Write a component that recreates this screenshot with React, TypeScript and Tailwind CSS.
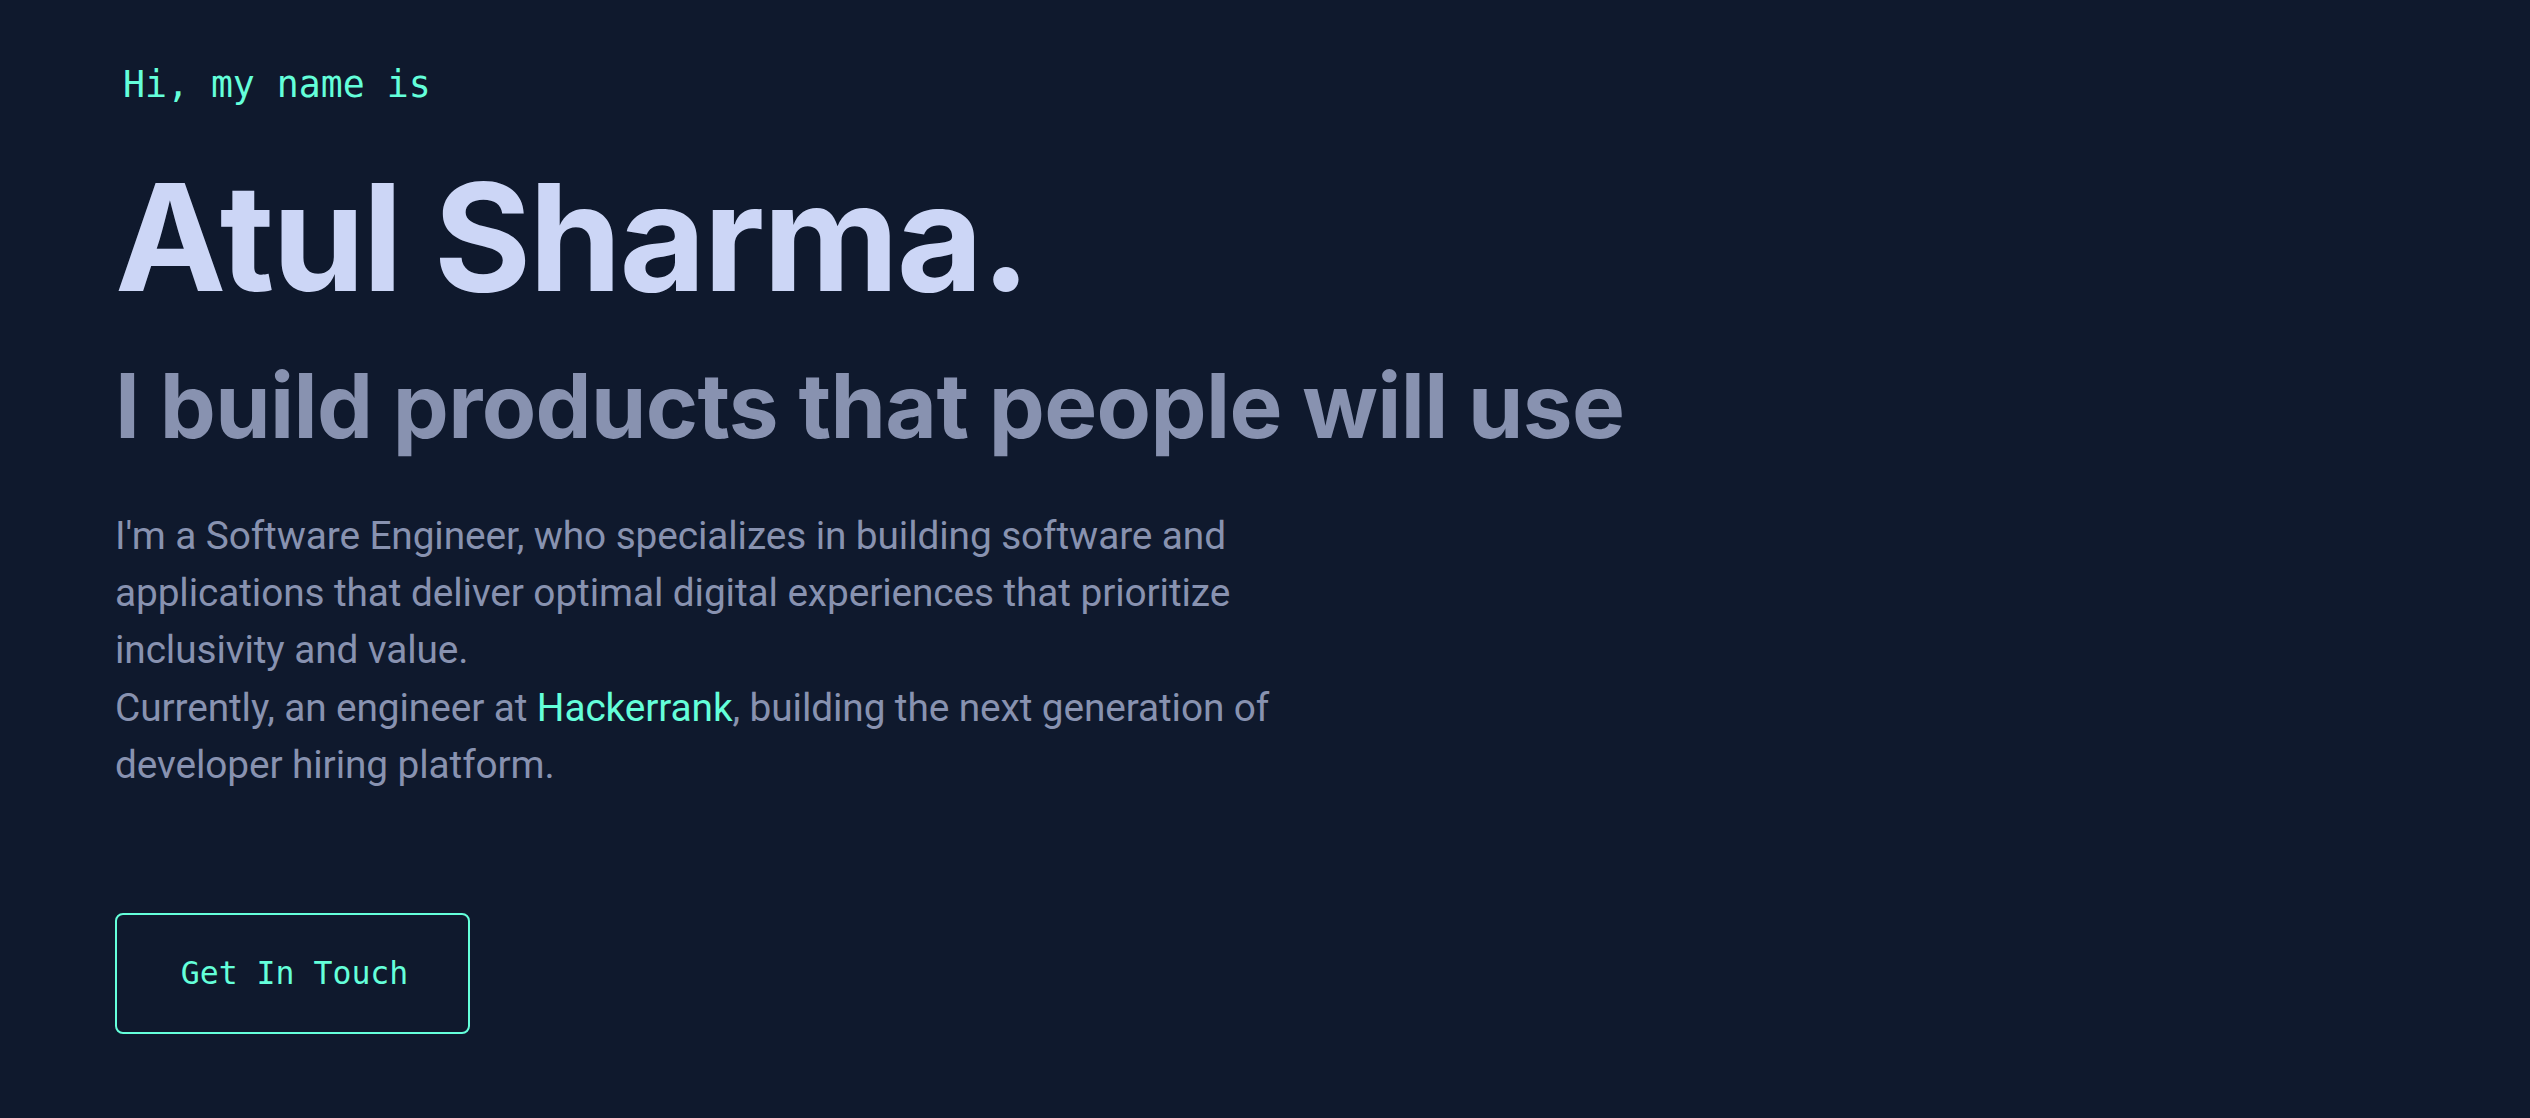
import React from "react";

export default function App() {
  return (
    <div className="min-h-screen w-full bg-[#0f192d] overflow-hidden">
      <section className="flex flex-col items-start pl-[115px] pt-[67px]">
        <h1 className="ml-[8px] text-[36.5px] leading-[36px] text-[#64ffda] [font-family:'DejaVu_Sans_Mono','Liberation_Mono',monospace]">
          Hi, my name is
        </h1>
        <h2 className="mt-[60px] whitespace-nowrap text-[149px] leading-[149px] font-bold tracking-[-2.3px] text-[#ccd6f6] [font-family:Inter,'Liberation_Sans',sans-serif]">
          Atul Sharma.
        </h2>
        <h3 className="mt-[49px] whitespace-nowrap text-[89px] leading-[89px] font-bold tracking-[-0.65px] text-[#8892b0] [font-family:Inter,'Liberation_Sans',sans-serif]">
          I build products that people will use
        </h3>
        <p className="mt-[57px] whitespace-nowrap text-[38.8px] leading-[57.2px] tracking-[-0.1px] text-[#8892b0] [font-family:Roboto,'Liberation_Sans',sans-serif]">
          I'm a Software Engineer, who specializes in building software and
          <br />
          applications that deliver optimal digital experiences that prioritize
          <br />
          inclusivity and value.
          <br />
          Currently, an engineer at <a className="text-[#64ffda]" href="#">Hackerrank</a>, building the next generation of
          <br />
          developer hiring platform.
        </p>
        <a
          href="#"
          className="mt-[120px] flex h-[121px] w-[355px] items-center justify-center rounded-[8px] border-2 border-[#64ffda] pl-[4px] text-[31.5px] leading-none text-[#64ffda] [font-family:'DejaVu_Sans_Mono','Liberation_Mono',monospace]"
        >
          Get In Touch
        </a>
      </section>
    </div>
  );
}
